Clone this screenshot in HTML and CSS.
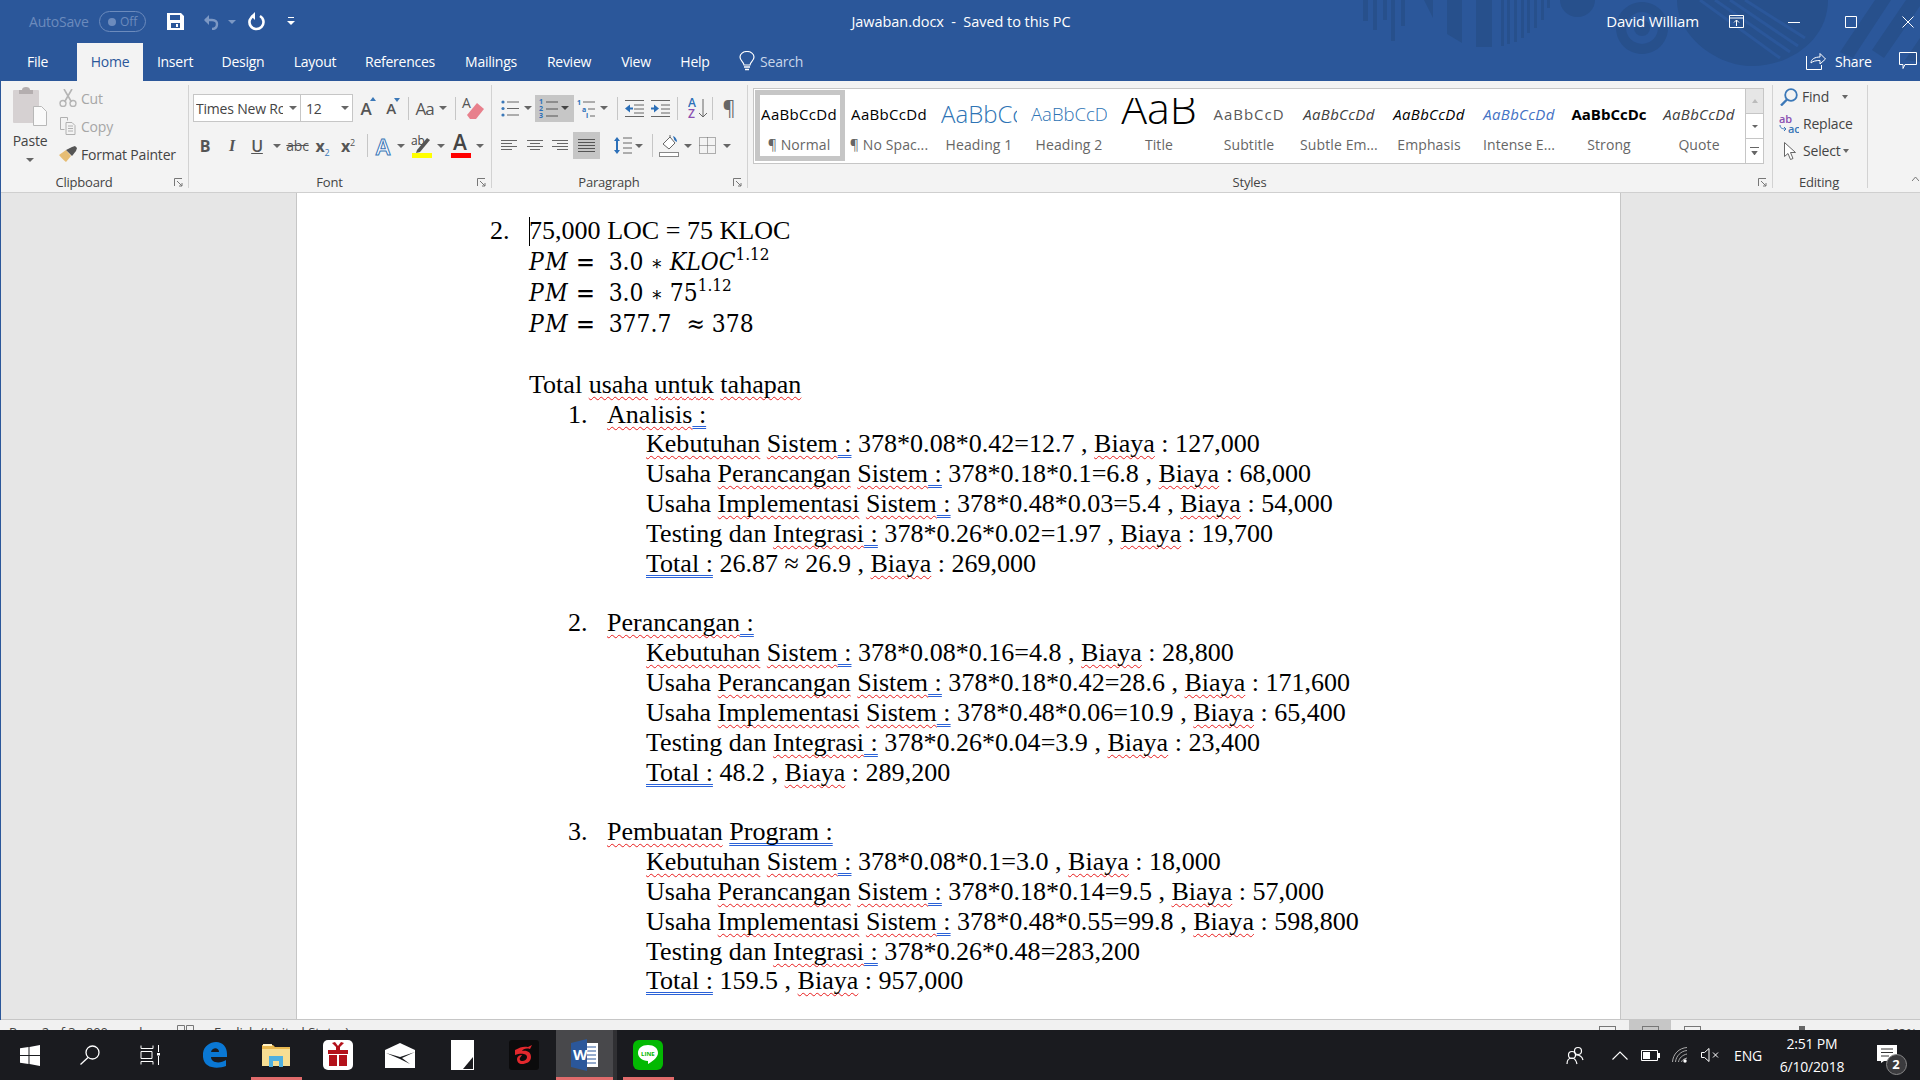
FILE: index.html
```html
<!DOCTYPE html>
<html lang="en">
<head>
<meta charset="utf-8">
<title>Jawaban.docx - Word</title>
<link rel="stylesheet" href="styles.css">
</head>
<body>
<div class="desktop">
<div class="window">
  <div class="head">
    <svg class="art" width="600" height="81" viewBox="1320 0 600 81">
      <g fill="#27508c">
        <rect x="1363" y="0" width="5" height="21"/><rect x="1373" y="0" width="4" height="30"/><rect x="1383" y="0" width="4" height="20"/><rect x="1391" y="0" width="4" height="41"/><rect x="1401" y="0" width="4" height="26"/>
        <path d="M1424 0h9v18z"/><path d="M1447 0h15v43l-15-9z"/><path d="M1476 0h16v47h-16z"/>
        <rect x="1501" y="0" width="3" height="46"/><rect x="1507" y="0" width="3" height="44"/><rect x="1514" y="0" width="3" height="42"/><rect x="1521" y="0" width="3" height="38"/><rect x="1527" y="0" width="3" height="33"/><rect x="1534" y="0" width="3" height="28"/><rect x="1541" y="0" width="3" height="20"/><rect x="1547" y="0" width="3" height="8"/>
        <path d="M1560 0h35a17.5 17 0 0 1-35 0z"/>
        <path fill-rule="evenodd" d="M1642 2a26 26 0 1 0 .01 0zM1642 12a16 16 0 1 1-.01 0z"/><circle cx="1642" cy="28" r="8"/>
        <path d="M1677 0h151c0 40-38 66-76 66c-36 0-75-30-75-66z"/>
        <path d="M1840 52l35-52h16l-38 58zM1872 50l34-50h14v6l-36 52zM1905 60l15-22v24z"/>
      </g>
      <g stroke="#2b579a" stroke-width="3" fill="none">
        <path d="M1700 0l80 58M1715 0l75 52M1730 0l68 46M1745 0l60 38"/>
      </g>
    </svg>
    <div class="titlebar">
      <div class="qat">
        <span class="autosave">AutoSave</span>
        <span class="toggle"><i class="knob"></i><span class="off">Off</span></span>
        <svg class="q-save" width="17" height="17" viewBox="0 0 17 17"><path fill="#fff" fill-rule="evenodd" d="M0 0h14l3 3v14H0zM3 2v5h10V2zM4 10v5h9v-5z"/><rect x="9" y="11" width="2" height="3" fill="#fff"/></svg>
        <svg class="q-undo" width="20" height="16" viewBox="0 0 20 16"><path d="M2 6h7c4 0 5 2 5 4s-1 5-5 5" fill="none" stroke="#7c98c4" stroke-width="2.4"/><path d="M6 1L1 6l5 5z" fill="#7c98c4"/></svg>
        <i class="car car-dim q-undocar"></i>
        <svg class="q-redo" width="17" height="19" viewBox="0 0 17 19"><path d="M6 3.5a7 7 0 1 0 6 .5" fill="none" stroke="#fff" stroke-width="2.6"/><path d="M7 0v8l-4-4z" fill="#fff"/></svg>
        <svg class="q-more" width="8" height="9" viewBox="0 0 8 9"><path d="M1 0h6v1H1z M0 4h8L4 8z" fill="#fff"/></svg>
      </div>
      <div class="doc-title">Jawaban.docx  -  Saved to this PC</div>
      <div class="winctl">
        <span class="user">David William</span>
        <svg class="w-restore" width="15" height="13" viewBox="0 0 15 13"><path d="M.5.5h14v12H.5zM.5 3h14M7.5 11V5M5 7.5l2.500-2.500 2.500 2.500" fill="none" stroke="#fff"/></svg>
        <svg class="w-min" width="12" height="12" viewBox="0 0 12 12"><path d="M0 6.500h12" stroke="#fff"/></svg>
        <svg class="w-max" width="12" height="12" viewBox="0 0 12 12"><path d="M.5.500h11v11H.5z" fill="none" stroke="#fff"/></svg>
        <svg class="w-close" width="12" height="12" viewBox="0 0 12 12"><path d="M.5.5l11 11M11.500.5l-11 11" stroke="#fff"/></svg>
      </div>
    </div>
    <nav class="tabs">
      <div class="tablist">
        <span class="tab tab-file">File</span><span class="tab active">Home</span><span class="tab">Insert</span><span class="tab">Design</span><span class="tab">Layout</span><span class="tab">References</span><span class="tab">Mailings</span><span class="tab">Review</span><span class="tab">View</span><span class="tab">Help</span>
      </div>
      <div class="search">
        <svg width="16" height="20" viewBox="0 0 16 20"><path d="M5 14c0-3-4-4-4-8a7 5.500 0 0 1 14 0c0 4-4 5-4 8z" fill="none" stroke="#fff" stroke-width="1.200"/><path d="M5 16h6M6 18.500h4" stroke="#fff" stroke-width="1.500"/></svg>
        <span>Search</span>
      </div>
      <div class="share">
        <svg width="20" height="18" viewBox="0 0 20 18"><path d="M.5 4v13.500h15V13" fill="none" stroke="#fff"/><path d="M5 11c0-4 4-6 9-6V1.500L19.500 7 14 12V8.500c-4 0-7 .5-9 2.500z" fill="none" stroke="#fff"/></svg>
        <span>Share</span>
        <svg class="comment" width="18" height="18" viewBox="0 0 18 18"><path d="M.5.500h17v12H6l-2 4v-4H.5z" fill="none" stroke="#fff"/></svg>
      </div>
    </nav>
  </div>

  <section class="ribbon">
    <div class="group g-clip">
      <div class="g-body clip">
        <div class="paste">
          <svg width="37" height="40" viewBox="0 0 37 40"><rect x="1" y="4" width="26" height="33" rx="1" fill="#d6d1d2"/><path d="M7 4h3a4 3 0 0 1 8 0h3v4H7z" fill="#b4aeaf"/><path d="M21.500 20.500h8l5 5v14h-13z" fill="#fafafa" stroke="#b8b8b8"/></svg>
          <span class="paste-lbl">Paste</span>
          <i class="car"></i>
        </div>
        <div class="clip-list">
          <div class="clip-row dim">
            <svg width="18" height="18" viewBox="0 0 18 18"><path d="M5 0l7.500 13M13 0L5.500 13" stroke="#b5b5b5" stroke-width="1.600" fill="none"/><circle cx="4" cy="14.500" r="3" fill="none" stroke="#b5b5b5" stroke-width="1.400"/><circle cx="14" cy="14.500" r="3" fill="none" stroke="#b5b5b5" stroke-width="1.400"/></svg>
            <span>Cut</span>
          </div>
          <div class="clip-row dim">
            <svg width="18" height="18" viewBox="0 0 18 18"><path d="M1.500.500h7v3M1.500.500v12h4M7 5.500h6l3 3v9H7zM9 9h5M9 11.500h5M9 14h5" fill="none" stroke="#b0b0b0"/></svg>
            <span>Copy</span>
          </div>
          <div class="clip-row">
            <svg width="18" height="16" viewBox="0 0 18 16"><path d="M0 9l7-5 5 6-5 6C4 14 2 11 0 9z" fill="#e6bd74"/><path d="M7 4l6-3 3-1 2 2-1 3-4 5z" fill="#555"/></svg>
            <span>Format Painter</span>
          </div>
        </div>
      </div>
      <div class="g-label">Clipboard</div>
      <svg class="launch" width="9" height="9" viewBox="0 0 9 9"><path d="M.5 8V.5H8M3 3l5 5M8 5v3H5" fill="none" stroke="#777"/></svg>
    </div>

    <div class="group g-font">
      <div class="g-body rows">
        <div class="grid font-r1">
          <div class="fontbox"><span class="fname">Times New Ro</span><i class="car"></i></div>
          <div class="fontbox sizebox"><span class="fname">12</span><i class="car"></i></div>
          <span class="ic ic-grow"><span class="bigA">A</span><i class="up"></i></span>
          <span class="ic ic-grow"><span class="smallA">A</span><i class="up down"></i></span>
          <i class="vsep"></i>
          <span class="ic aa">Aa</span><i class="car"></i>
          <i class="vsep"></i>
          <svg width="26" height="26" viewBox="0 0 26 26"><text x="1" y="13" class="svgA">A</text><path d="M6 20l10-12 7 6-8 10H9z" fill="#e8808c"/></svg>
        </div>
        <div class="grid font-r2">
          <span class="ic b">B</span><span class="ic i">I</span><span class="ic u">U</span><i class="car"></i>
          <span class="ic abc">abc</span>
          <span class="ic xs">x<sub>2</sub></span><span class="ic xs">x<sup>2</sup></span>
          <i class="vsep"></i>
          <span class="ic fx">A</span><i class="car"></i>
          <svg width="22" height="24" viewBox="0 0 22 24"><text x="0" y="11" class="svgab">ab</text><path d="M6 16l10-12 3 2-10 12-4 1z" fill="#555"/><rect x="1" y="19" width="20" height="5" fill="#ffff00"/></svg><i class="car"></i>
          <svg width="20" height="24" viewBox="0 0 20 24"><text x="2" y="16" class="svgAb">A</text><rect y="19" width="20" height="5" fill="#ff0000"/></svg><i class="car"></i>
        </div>
      </div>
      <div class="g-label">Font</div>
      <svg class="launch" width="9" height="9" viewBox="0 0 9 9"><path d="M.5 8V.5H8M3 3l5 5M8 5v3H5" fill="none" stroke="#777"/></svg>
    </div>

    <div class="group g-para">
      <div class="g-body rows">
        <div class="grid para-r1">
          <svg width="19" height="17" viewBox="0 0 19 17"><g fill="#3b78b8"><circle cx="2" cy="2" r="1.600"/><circle cx="2" cy="8.500" r="1.600"/><circle cx="2" cy="15" r="1.600"/></g><path d="M6 2h12M6 8.500h12M6 15h12" stroke="#666"/></svg>
          <i class="car"></i>
          <div class="on numbering">
            <svg width="19" height="19" viewBox="0 0 19 19"><g class="numdig"><text x="0" y="5">1</text><text x="0" y="12">2</text><text x="0" y="19">3</text></g><path d="M7 3h12M7 10h12M7 17h12" stroke="#555"/></svg>
            <i class="car car-dark"></i>
          </div>
          <svg class="to-end" width="19" height="19" viewBox="0 0 19 19"><g class="numdig"><text x="0" y="6">1</text><text x="5" y="13">a</text><text x="9" y="19">i</text></g><path d="M6 3h12M11 10h7M13 17h5" stroke="#666"/></svg>
          <i class="car"></i>
          <i class="vsep"></i>
          <svg width="19" height="17" viewBox="0 0 19 17"><path d="M0 .5h19M9 5h10M9 9h10M9 13h10M0 16.500h19" stroke="#666"/><path d="M0 8.500l5-4v3h3v2H5v3z" fill="#2b6fb8"/></svg>
          <svg width="19" height="17" viewBox="0 0 19 17"><path d="M0 .5h19M10 5h9M10 9h9M10 13h9M0 16.500h19" stroke="#666"/><path d="M8 8.500l-5-4v3H0v2h3v3z" fill="#2b6fb8"/></svg>
          <i class="vsep"></i>
          <svg class="to-end" width="20" height="21" viewBox="0 0 20 21"><text x="0" y="9" class="az1">A</text><text x="0" y="20" class="az2">Z</text><path d="M15 1v18M11 15l4 4 4-4" fill="none" stroke="#666"/></svg>
          <i class="vsep"></i>
          <span class="ic pil">¶</span>
        </div>
        <div class="grid para-r2">
          <svg width="17" height="11" viewBox="0 0 17 11"><path d="M0 .5h16M0 3.500h11M0 6.500h16M0 9.500h11" stroke="#666"/></svg>
          <svg width="17" height="11" viewBox="0 0 17 11"><path d="M0 .5h16M3 3.500h10M0 6.500h16M3 9.500h10" stroke="#666"/></svg>
          <svg width="17" height="11" viewBox="0 0 17 11"><path d="M0 .5h16M5 3.500h11M0 6.500h16M5 9.500h11" stroke="#666"/></svg>
          <div class="on just"><svg width="17" height="13" viewBox="0 0 17 13"><path d="M0 .5h17M0 3.500h17M0 6.500h17M0 9.500h17M0 12.500h17" stroke="#555"/></svg></div>
          <svg class="to-end" width="18" height="19" viewBox="0 0 18 19"><path d="M3 3v13" stroke="#2b6fb8" stroke-width="2"/><path d="M0 5l3-4 3 4zM0 14l3 4 3-4z" fill="#2b6fb8"/><path d="M9 2h9M9 7h9M9 12h9M9 17h9" stroke="#666"/></svg>
          <i class="car"></i>
          <i class="vsep"></i>
          <svg width="20" height="23" viewBox="0 0 20 23"><rect x=".5" y="18.500" width="19" height="4" fill="#fff" stroke="#888"/><path d="M4 10l7-7 5 6-6 6z" fill="#fff" stroke="#666"/><path d="M11 1v3" stroke="#666"/><path d="M14 2c3 1 4 4 4 6-2-1-3-2-3-3z" fill="#2b6fb8"/></svg>
          <i class="car"></i>
          <svg width="17" height="17" viewBox="0 0 17 17"><path d="M.5.500h16v16H.5zM.5 8.500h16M8.500.500v16" fill="none" stroke="#666" stroke-dasharray="1 1"/></svg>
          <i class="car"></i>
        </div>
      </div>
      <div class="g-label">Paragraph</div>
      <svg class="launch" width="9" height="9" viewBox="0 0 9 9"><path d="M.5 8V.5H8M3 3l5 5M8 5v3H5" fill="none" stroke="#777"/></svg>
    </div>

    <div class="group g-styles">
      <div class="gallery">
        <div class="style selected"><div class="sample">AaBbCcDd</div><div class="slabel">¶ Normal</div></div>
        <div class="style"><div class="sample">AaBbCcDd</div><div class="slabel">¶ No Spac...</div></div>
        <div class="style"><div class="sample s-h1">AaBbCc</div><div class="slabel">Heading 1</div></div>
        <div class="style"><div class="sample s-h2">AaBbCcD</div><div class="slabel">Heading 2</div></div>
        <div class="style"><div class="sample s-title">AaB</div><div class="slabel">Title</div></div>
        <div class="style"><div class="sample s-sub">AaBbCcD</div><div class="slabel">Subtitle</div></div>
        <div class="style"><div class="sample s-se">AaBbCcDd</div><div class="slabel">Subtle Em...</div></div>
        <div class="style"><div class="sample s-em">AaBbCcDd</div><div class="slabel">Emphasis</div></div>
        <div class="style"><div class="sample s-ie">AaBbCcDd</div><div class="slabel">Intense E...</div></div>
        <div class="style"><div class="sample s-st">AaBbCcDc</div><div class="slabel">Strong</div></div>
        <div class="style"><div class="sample s-se">AaBbCcDd</div><div class="slabel">Quote</div></div>
        <div class="scroller">
          <span class="sbtn disabled"><i class="up-car"></i></span>
          <span class="sbtn"><i class="car"></i></span>
          <span class="sbtn last"><i class="more-car"></i></span>
        </div>
      </div>
      <div class="g-label l-styles">Styles</div>
      <svg class="launch" width="9" height="9" viewBox="0 0 9 9"><path d="M.5 8V.5H8M3 3l5 5M8 5v3H5" fill="none" stroke="#777"/></svg>
    </div>

    <div class="group g-edit">
      <div class="g-body edit">
        <div class="edit-row e-find">
          <svg width="18" height="18" viewBox="0 0 18 18"><circle cx="11" cy="7" r="5.800" fill="none" stroke="#3b78b8" stroke-width="1.800"/><path d="M7 11.500L1 17.500" stroke="#3b78b8" stroke-width="2.400"/></svg>
          <span>Find</span><i class="car car-find"></i>
        </div>
        <div class="edit-row e-rep">
          <svg width="20" height="20" viewBox="0 0 20 20"><text x="0" y="9" class="abtop">ab</text><text x="9" y="19" class="acbot">ac</text><path d="M1 11c0 3 2 4 6 4M5 13l2 2-2 2" fill="none" stroke="#3b78b8"/></svg>
          <span>Replace</span>
        </div>
        <div class="edit-row e-sel">
          <svg width="12" height="18" viewBox="0 0 12 18"><path d="M.5.500v14l3.500-3 2.500 6 2.500-1-2.500-6h5z" fill="#fff" stroke="#666"/></svg>
          <span>Select</span><i class="car car-sel"></i>
        </div>
      </div>
      <div class="g-label g-label-plain">Editing</div>
    </div>
    <svg class="collapse" width="7" height="5" viewBox="0 0 7 5"><path d="M0 5l3.500-4L7 5" fill="none" stroke="#777"/></svg>
  </section>

  <main class="docarea">
    <article class="page">
      <div class="ln tall n0"><span class="num">2.</span><i class="cursor"></i>75,000 LOC = 75 KLOC</div>
      <div class="ln tall l0 math"><em class="pm">PM</em><span class="eq">=</span><span>3.0</span><span class="ast">∗</span><em>KLOC</em><sup>1.12</sup></div>
      <div class="ln tall l0 math"><em class="pm">PM</em><span class="eq">=</span><span>3.0</span><span class="ast">∗</span><span>75</span><sup>1.12</sup></div>
      <div class="ln tall l0 math"><em class="pm">PM</em><span class="eq">=</span><span>377.7</span><span class="apx">≈</span><span>378</span></div>
      <div class="ln"></div>
      <div class="ln l0">Total <u class="r">usaha</u> <u class="r">untuk</u> <u class="r">tahapan</u></div>
      <div class="ln n1"><span class="num">1.</span><u class="r">Analisis</u><u class="g"> :</u></div>
      <div class="ln l2"><u class="r">Kebutuhan</u> <u class="r">Sistem</u><u class="g"> :</u> 378*0.08*0.42=12.7 , <u class="r">Biaya</u> : 127,000</div>
      <div class="ln l2">Usaha <u class="r">Perancangan</u> <u class="r">Sistem</u><u class="g"> :</u> 378*0.18*0.1=6.8 , <u class="r">Biaya</u> : 68,000</div>
      <div class="ln l2">Usaha <u class="r">Implementasi</u> <u class="r">Sistem</u><u class="g"> :</u> 378*0.48*0.03=5.4 , <u class="r">Biaya</u> : 54,000</div>
      <div class="ln l2">Testing dan <u class="r">Integrasi</u><u class="g"> :</u> 378*0.26*0.02=1.97 , <u class="r">Biaya</u> : 19,700</div>
      <div class="ln l2"><u class="g">Total :</u> 26.87 ≈ 26.9 , <u class="r">Biaya</u> : 269,000</div>
      <div class="ln"></div>
      <div class="ln n1"><span class="num">2.</span><u class="r">Perancangan</u><u class="g"> :</u></div>
      <div class="ln l2"><u class="r">Kebutuhan</u> <u class="r">Sistem</u><u class="g"> :</u> 378*0.08*0.16=4.8 , <u class="r">Biaya</u> : 28,800</div>
      <div class="ln l2">Usaha <u class="r">Perancangan</u> <u class="r">Sistem</u><u class="g"> :</u> 378*0.18*0.42=28.6 , <u class="r">Biaya</u> : 171,600</div>
      <div class="ln l2">Usaha <u class="r">Implementasi</u> <u class="r">Sistem</u><u class="g"> :</u> 378*0.48*0.06=10.9 , <u class="r">Biaya</u> : 65,400</div>
      <div class="ln l2">Testing dan <u class="r">Integrasi</u><u class="g"> :</u> 378*0.26*0.04=3.9 , <u class="r">Biaya</u> : 23,400</div>
      <div class="ln l2"><u class="g">Total :</u> 48.2 , <u class="r">Biaya</u> : 289,200</div>
      <div class="ln"></div>
      <div class="ln n1"><span class="num">3.</span><u class="r">Pembuatan</u> <u class="g">Program :</u></div>
      <div class="ln l2"><u class="r">Kebutuhan</u> <u class="r">Sistem</u><u class="g"> :</u> 378*0.08*0.1=3.0 , <u class="r">Biaya</u> : 18,000</div>
      <div class="ln l2">Usaha <u class="r">Perancangan</u> <u class="r">Sistem</u><u class="g"> :</u> 378*0.18*0.14=9.5 , <u class="r">Biaya</u> : 57,000</div>
      <div class="ln l2">Usaha <u class="r">Implementasi</u> <u class="r">Sistem</u><u class="g"> :</u> 378*0.48*0.55=99.8 , <u class="r">Biaya</u> : 598,800</div>
      <div class="ln l2">Testing dan <u class="r">Integrasi</u><u class="g"> :</u> 378*0.26*0.48=283,200</div>
      <div class="ln l2"><u class="g">Total :</u> 159.5 , <u class="r">Biaya</u> : 957,000</div>
    </article>
  </main>

  <footer class="status">
    <span class="st-page">Page 2 of 3   800 words</span>
    <svg class="st-book" width="17" height="10" viewBox="0 0 17 10"><path d="M.5 10V.5h7V10M9.500 10V.5h7V10" fill="none" stroke="#777"/></svg>
    <span class="st-lang">English (United States)</span>
    <span class="st-view st-v1"></span>
    <span class="st-active"><i class="st-view"></i></span>
    <span class="st-view st-v3"></span>
    <i class="st-thumb"></i>
    <span class="st-zoom">163%</span>
  </footer>
</div>

<div class="taskbar">
  <div class="tb-left">
    <span class="tb-sys">
      <svg width="20" height="21" viewBox="0 0 20 21"><path fill="#fff" d="M0 3.200L8.500 2v8H0zM9.500 1.900L20 0v10H9.500zM0 11h8.500v8L0 17.800zM9.500 11H20v10L9.500 19.100z"/></svg>
    </span>
    <span class="tb-sys">
      <svg width="20" height="20" viewBox="0 0 20 20"><circle cx="12.500" cy="7.500" r="6.500" fill="none" stroke="#fff" stroke-width="1.300"/><path d="M8 12.500L.5 19.500" stroke="#fff" stroke-width="1.300"/></svg>
    </span>
    <span class="tb-sys">
      <svg width="20" height="20" viewBox="0 0 20 20"><path d="M1 3.500h12v-3M1 .5v3M1 6.500h11v7H1zM1 19.500v-3h12v3M18.500 0v7M18.500 11v9" fill="none" stroke="#fff"/><rect x="17" y="8" width="3" height="2.500" fill="#fff"/></svg>
    </span>
    <span class="tb-btn tb-first">
      <svg width="25" height="26" viewBox="0 0 25 26"><path fill="#0a78d4" fill-rule="evenodd" d="M1 11C2 4 8 0 14 0c7 0 11 5 11 12v3H9c0 6 9 7 15 3v6c-8 3-22 3-23-9zM9 10h8c0-5-7-5-8 0z"/></svg>
    </span>
    <span class="tb-btn run">
      <svg width="28" height="23" viewBox="0 0 28 23"><path fill="#e9b84f" d="M0 1h11l2 2h15v18H0z"/><path fill="#f7de93" d="M0 5h28v17H0z"/><path fill="#fff3c7" d="M1 0h9v2H1z"/><path fill="#4fb0e0" d="M7 23V12h14v11h-4v-6h-6v6z"/></svg>
    </span>
    <span class="tb-btn">
      <svg width="30" height="30" viewBox="0 0 30 30"><rect width="30" height="30" rx="5" fill="#fff"/><path fill="#b3111a" d="M5 10h20v4H5zM6 15h8v11H6zM16 15h8v11h-8zM13 10V7L9 3l3-1 3 4 3-4 3 1-4 4v3z"/></svg>
    </span>
    <span class="tb-btn">
      <svg width="30" height="25" viewBox="0 0 30 25"><path fill="#fff" d="M0 7L15 0l15 7v18H0z"/><path fill="#191a1e" d="M1 10l14 4 15-5-13 6 8 6-10-5z"/></svg>
    </span>
    <span class="tb-btn">
      <svg width="23" height="30" viewBox="0 0 23 30"><path fill="#fff" d="M0 0h23v30H0z"/><path fill="#1a1a1e" d="M12 29l10-12v12z"/></svg>
    </span>
    <span class="tb-btn">
      <svg width="30" height="30" viewBox="0 0 30 30"><rect width="30" height="30" rx="3" fill="#0b0b0c"/><path d="M6 10c5-3 9-4 13-3l4-2-2 4c-4-1-7 0-8 2 5-1 9 1 9 6 0 5-5 7-9 7-3 0-5-2-5-5 0-2 2-4 5-4-1 2-3 3-2 5 1 2 7 1 7-3s-7-4-12-2z" fill="#e2282d"/></svg>
    </span>
    <span class="tb-btn tb-word run">
      <svg width="27" height="32" viewBox="0 0 27 32"><path fill="#fff" d="M13 4h14v24H13z"/><path d="M16 8h9M16 12h9M16 16h9M16 20h9M16 24h9" stroke="#2b579a"/><path fill="#2b579a" d="M0 4l16-4v32L0 28z"/><text x="2" y="21" class="wlogo">W</text></svg>
    </span>
    <span class="tb-btn run">
      <svg width="30" height="30" viewBox="0 0 30 30"><rect width="30" height="30" rx="6" fill="#03b902"/><path fill="#fff" d="M15 5c6 0 10 3 10 8 0 5-7 9-10 11v-3C9 21 5 17 5 13c0-5 4-8 10-8z"/><text x="8" y="16" class="linetxt">LINE</text></svg>
    </span>
  </div>
  <div class="tray">
    <svg width="18" height="19" viewBox="0 0 18 19"><circle cx="12" cy="5" r="3.500" fill="none" stroke="#fff" stroke-width="1.200"/><circle cx="6" cy="9" r="3.500" fill="none" stroke="#fff" stroke-width="1.200"/><path d="M1 18c0-4 2-6 5-6s4 2 5 6M10 9c3 0 6 1 7 5" fill="none" stroke="#fff" stroke-width="1.200"/></svg>
    <span></span>
    <svg width="16" height="9" viewBox="0 0 16 9"><path d="M.5 8.500L8 1l7.500 7.500" fill="none" stroke="#fff" stroke-width="1.100"/></svg>
    <svg width="19" height="11" viewBox="0 0 19 11"><path d="M.5.500h16v10H.5z" fill="none" stroke="#fff"/><rect x="2" y="2" width="7" height="7" fill="#fff"/><rect x="17" y="3" width="2" height="5" fill="#fff"/></svg>
    <svg width="16" height="16" viewBox="0 0 16 16"><path d="M.5 15C1 7 7 1 15 .5M3.500 15C4 9 9 4 15 3.500M6.500 15c.5-4 4-7 8.500-8" fill="none" stroke="#aaa"/><path d="M9.500 15c.5-2 2-3 5.500-4" fill="none" stroke="#aaa"/><circle cx="13" cy="14" r="1.700" fill="#fff"/></svg>
    <svg width="19" height="14" viewBox="0 0 19 14"><path d="M.5 4.500h3L8 .5v13L3.500 9.500h-3zM12 4.500l5 5M17 4.500l-5 5" fill="none" stroke="#fff"/></svg>
    <span class="eng">ENG</span>
    <div class="clock"><span>2:51 PM</span><span>6/10/2018</span></div>
    <span class="notif">
      <svg width="20" height="18" viewBox="0 0 20 18"><path fill="#fff" d="M0 0h20v16H7l-3 2v-2H0z"/><path d="M4 4h12M4 7.500h12M4 11h8" stroke="#333"/></svg>
      <span class="badge">2</span>
    </span>
  </div>
</div>
</div>
</body>
</html>
```

FILE: styles.css
```css
* { box-sizing: border-box; }
html, body { margin: 0; padding: 0; }
body { font-family: "Open Sans", "Noto Sans", sans-serif; background: #1a1b1f; }
svg { display: block; flex: none; }
i { display: block; }
.desktop { width: 1920px; height: 1080px; display: flex; flex-direction: column; overflow: hidden; }
.window { height: 1030px; display: flex; flex-direction: column; border-left: 1px solid #2b579a; background: #f3f3f3; }

/* header */
.head { position: relative; background: #2b579a; color: #fff; height: 81px; flex: none; margin-left: -1px; }
.art { position: absolute; right: 0; top: 0; }
.titlebar { position: relative; height: 43px; display: grid; grid-template-columns: 1fr auto 1fr; align-items: center; }
.qat { display: flex; align-items: center; padding-left: 29px; }
.autosave { font-size: 14px; color: #6c8bbd; width: 63px; white-space: nowrap; letter-spacing: -.2px; }
.toggle { width: 47px; height: 21px; margin-left: 7px; border: 1px solid #6c8bbd; border-radius: 11px; display: flex; align-items: center; padding-left: 8px; gap: 4px; }
.knob { width: 8px; height: 8px; border-radius: 50%; background: #6c8bbd; }
.off { font-size: 12px; color: #6c8bbd; }
.q-save { margin-left: 21px; }
.q-undo { margin-left: 19px; }
.q-undocar { margin-left: 5px; }
.q-redo { margin-left: 12px; }
.q-more { margin-left: 22px; }
.doc-title { font-size: 14.5px; white-space: pre; letter-spacing: -.05px; margin-left: 2px; }
.winctl { display: flex; align-items: center; justify-content: flex-end; padding-right: 6px; }
.user { font-size: 15px; white-space: nowrap; letter-spacing: -.15px; padding-bottom: 2px; }
.w-restore { margin-left: 30px; }
.w-min { margin-left: 44px; }
.w-max { margin-left: 45px; }
.w-close { margin-left: 45px; }

.tabs { position: relative; height: 38px; display: flex; align-items: stretch; }
.tablist { display: grid; grid-template-columns: 77px 66px 64px 72px 72px 98px 84px 72px 62px 56px; }
.tab { font-size: 14px; letter-spacing: -.25px; display: flex; align-items: center; justify-content: center; padding-bottom: 1px; }
.tab-file { padding-right: 2px; }
.tab.active { background: #f3f3f3; color: #2b579a; }
.search { display: flex; align-items: center; padding: 0 0 2px 16px; gap: 5px; font-size: 14px; color: #c9d6ea; letter-spacing: -.2px; }
.share { margin-left: auto; display: flex; align-items: center; font-size: 14px; padding: 0 3px 2px 0; letter-spacing: -.2px; }
.share span { margin-left: 9px; width: 37px; }
.comment { margin-left: 27px; }

/* ribbon */
.ribbon { position: relative; display: flex; height: 112px; flex: none; padding-top: 4px; border-bottom: 1px solid #cfcfcf; background: #f3f3f3; color: #444; font-size: 14px; letter-spacing: -.2px; }
.group { position: relative; height: 103px; display: flex; flex-direction: column; border-right: 1px solid #d2d2d2; flex: none; }
.g-clip { width: 188px; }
.g-font { width: 303px; }
.g-para { width: 256px; }
.g-styles { width: 1025px; }
.g-edit { width: 95px; }
.g-body { height: 89px; flex: none; }
.g-label { height: 14px; line-height: 16px; font-size: 13px; text-align: center; color: #444; padding-right: 21px; }
.g-label-plain { padding-right: 2px; }
.launch { position: absolute; right: 5px; bottom: 1px; }
.collapse { position: absolute; right: 1px; top: 95px; }

.car { width: 0; height: 0; border-left: 4px solid transparent; border-right: 4px solid transparent; border-top: 4px solid #666; }
.car-dim { border-top-color: #7c98c4; }
.car-dark { border-top-color: #444; }

.clip { display: flex; }
.paste { width: 58px; display: flex; flex-direction: column; align-items: center; padding-top: 1px; }
.paste-lbl { margin-top: 5px; line-height: 20px; }
.paste .car { margin-top: 7px; }
.clip-list { display: flex; flex-direction: column; margin-top: -1px; }
.clip-row { height: 28px; display: flex; align-items: center; gap: 4px; white-space: nowrap; }
.clip-row.dim { color: #a6a6a6; }

.rows { display: flex; flex-direction: column; padding-top: 9px; gap: 10px; }
.grid { display: grid; justify-items: center; align-items: center; justify-content: start; }
.font-r1 { height: 28px; grid-template-columns: 108px 52px 26px 24px 10px 23px 14px 10px 28px; margin-left: 4px; }
.font-r2 { height: 27px; grid-template-columns: 28px 26px 24px 16px 25px 25px 26px 12px 20px 16px 25px 14px 25px 14px; margin-left: 2px; }
.fontbox { width: 100%; height: 28px; background: #fff; border: 1px solid #c6c6c6; display: flex; align-items: center; padding: 0 3px 0 2px; overflow: hidden; }
.sizebox { border-left: 0; }
.fname { flex: 1; overflow: hidden; white-space: nowrap; font-size: 14px; margin-right: 6px; }
.sizebox .fname { padding-left: 3px; }
.vsep { width: 1px; height: 23px; background: #c6c6c6; }
.ic { color: #555; line-height: 1; }
.ic-grow { position: relative; display: block; }
.bigA { font-size: 17px; font-weight: 600; }
.smallA { font-size: 15px; font-weight: 600; }
.up { position: absolute; right: -4px; top: -3px; border-left: 3px solid transparent; border-right: 3px solid transparent; border-bottom: 4px solid #3b78b8; }
.down { border-bottom: 0; border-top: 4px solid #3b78b8; }
.aa { font-size: 17px; letter-spacing: -1px; }
.svgA { font-size: 14px; fill: #555; }
.svgab { font-size: 12px; fill: #444; }
.svgAb { font-size: 21px; fill: #444; font-weight: 600; }
.b { font-weight: 700; font-size: 16px; }
.i { font-style: italic; font-weight: 600; font-size: 16px; font-family: "Liberation Serif", serif; }
.u { text-decoration: underline; font-weight: 600; font-size: 16px; }
.abc { text-decoration: line-through; font-size: 14px; }
.xs { font-weight: 700; font-size: 16px; }
.xs sub, .xs sup { font-size: 9px; font-weight: 400; color: #3b78b8; line-height: 0; }
.xs sup { color: #555; }
.fx { font-size: 22px; font-weight: 600; color: #fff; -webkit-text-stroke: 1px #3b78b8; }

.para-r1 { height: 28px; grid-template-columns: 20px 15px 39px 22px 16px 10px 24px 28px 6px 28px 8px 26px; margin-left: 8px; }
.para-r2 { height: 27px; grid-template-columns: 26px 26px 25px 27px 32px 14px 12px 22px 16px 22px 18px; margin-left: 4px; }
.to-end { justify-self: end; }
.on { background: #c6c6c6; height: 27px; display: flex; align-items: center; }
.numbering { width: 39px; padding-left: 4px; gap: 3px; }
.just { width: 27px; justify-content: center; }
.numdig text { font-size: 7px; fill: #2b6fb8; font-weight: 700; letter-spacing: 0; }
.az1 { font-size: 12px; fill: #2b6fb8; font-weight: 600; }
.az2 { font-size: 12px; fill: #8a4fb0; font-weight: 600; }
.pil { font-size: 20px; color: #666; }

.gallery { width: 1011px; height: 76px; margin: 3px 0 0 5px; flex: none; display: flex; background: #fff; border: 1px solid #c6c6c6; padding: 1px; }
.style { width: 90px; height: 71px; flex: none; display: flex; flex-direction: column; align-items: center; padding-right: 2px; }
.style.selected { outline: 5px solid #c6c6c6; outline-offset: -5px; }
.sample { width: 76px; height: 30px; margin-top: 8px; overflow: hidden; white-space: nowrap; text-align: center; font-size: 15px; line-height: 32px; color: #000; letter-spacing: .3px; }
.slabel { margin-top: 7px; line-height: 20px; color: #666; font-size: 14px; white-space: nowrap; letter-spacing: .1px; }
.s-h1 { font-size: 24px; font-weight: 300; color: #2e74b5; text-align: left; line-height: 32px; letter-spacing: 0; }
.s-h2 { font-size: 18.500px; font-weight: 300; color: #2e74b5; text-align: left; letter-spacing: 0; }
.s-title { font-size: 43px; font-weight: 300; line-height: 20px; overflow: hidden; letter-spacing: 0; }
.s-sub { color: #595959; letter-spacing: 1px; }
.s-se { font-style: italic; color: #404040; }
.s-em { font-style: italic; }
.s-ie { font-style: italic; color: #4472c4; }
.s-st { font-weight: 700; letter-spacing: 0; }
.scroller { width: 18px; display: flex; flex-direction: column; margin: -1px -1px -1px 0; border-left: 1px solid #c6c6c6; flex: none; }
.sbtn { flex: 1; display: flex; align-items: center; justify-content: center; border-bottom: 1px solid #c6c6c6; }
.sbtn.disabled { background: #e6e6e6; }
.sbtn.last { border-bottom: 0; }
.sbtn .car { border-left-width: 3px; border-right-width: 3px; border-top-width: 3px; }
.up-car { border-left: 3px solid transparent; border-right: 3px solid transparent; border-bottom: 4px solid #bbb; }
.more-car { width: 9px; height: 9px; border-top: 1px solid #666; background: linear-gradient(#666,#666) top 3px center / 9px 4px no-repeat; clip-path: polygon(0 0,100% 0,100% 30%,50% 100%,0 30%); }
.l-styles { margin-top: 10px; flex: none; }

.edit { display: flex; flex-direction: column; margin: -2px 0 2px; }
.edit-row { height: 27px; flex: none; display: flex; align-items: center; white-space: nowrap; }
.edit-row span { margin-left: 4px; }
.e-find { padding-left: 7px; }
.e-rep { padding-left: 6px; }
.e-sel { padding-left: 11px; }
.e-sel span { margin-left: 7px; }
.car-find { margin-left: 13px; border-left-width: 3px; border-right-width: 3px; }
.car-sel { margin-left: 3px; border-left-width: 3px; border-right-width: 3px; }
.abtop { font-size: 11px; fill: #8a4fb0; font-weight: 600; }
.acbot { font-size: 11px; fill: #3b78b8; font-weight: 600; }

/* document */
.docarea { flex: 1; min-height: 0; background: #e6e6e6; display: flex; justify-content: center; overflow: hidden; border-bottom: 1px solid #c6c6c6; padding-right: 4px; }
.page { width: 1325px; background: #fff; border-left: 1px solid #c6c6c6; border-right: 1px solid #c6c6c6; padding: 23px 0 0 193px; font-family: "Liberation Serif", "Times New Roman", serif; font-size: 26.060px; color: #000; overflow: hidden; }
.ln { height: 29.840px; line-height: 30px; white-space: pre; }
.tall { height: 31px; }
.num { display: inline-block; width: 39px; }
.l0 { padding-left: 39px; }
.n1 { padding-left: 78px; }
.l2 { padding-left: 156px; }
.cursor { display: inline-block; width: 1px; height: 29px; background: #000; margin-right: -1px; vertical-align: -7px; }
u.r { text-decoration: underline wavy #e81c1c 1.200px; text-underline-offset: 2.500px; text-decoration-skip-ink: none; }
u.g { text-decoration: underline double #2a62d8 1px; text-underline-offset: 3px; text-decoration-skip-ink: none; }
.math { font-family: "DejaVu Serif", serif; font-stretch: condensed; font-size: 24.400px; }
.math em { font-style: italic; }
.math .pm { letter-spacing: 1.500px; }
.math sup { font-size: 17px; line-height: 0; vertical-align: 10px; }
.eq { margin: 0 14px 0 7px; -webkit-text-stroke: .4px #000; }
.ast { margin: 0 7px; font-size: 20px; }
.apx { margin: 0 7px 0 15px; }

.status { height: 10px; flex: none; display: flex; overflow: hidden; background: #f1f1f1; margin-left: -1px; color: #444; font-size: 13px; line-height: 18px; white-space: pre; }
.status > span { padding-top: 3px; }
.st-page { margin-left: 9px; width: 168px; }
.st-book { margin-top: 5px; }
.st-lang { margin-left: 20px; }
.st-view { width: 17px; height: 8px; border: 1px solid #777; border-bottom: 0; }
.status .st-v1 { margin-left: auto; margin-top: 6px; padding: 0; }
.status .st-active { width: 42px; margin-left: 13px; background: #c6c6c6; display: flex; justify-content: center; padding-top: 6px; }
.status .st-v3 { margin-left: 13px; margin-top: 6px; padding: 0; }
.st-thumb { width: 6px; height: 4px; margin: 6px 0 0 98px; background: #666; }
.status .st-zoom { margin-left: 79px; width: 36px; padding-top: 4px; }

/* taskbar */
.taskbar { height: 50px; flex: none; background: #1a1b1f; color: #fff; display: flex; justify-content: space-between; }
.tb-left { display: flex; }
.tb-sys { width: 60px; display: flex; align-items: center; justify-content: center; }
.tb-btn { position: relative; width: 62px; display: flex; align-items: center; justify-content: center; }
.tb-first { margin-left: 3px; }
.tb-word { width: 57px; margin: 0 4px 0 1px; background: #48484b; box-shadow: 4px 0 0 #303033; }
.run::after { content: ""; position: absolute; left: 5.500px; right: 5.500px; bottom: 0; height: 3px; background: #e06b6b; }
.tb-word.run::after { left: 0; right: 0; }
.wlogo { font-size: 15px; font-weight: 700; fill: #fff; }
.linetxt { font-size: 6px; font-weight: 700; fill: #03b902; letter-spacing: 0; }
.tray { width: 360px; display: grid; grid-template-columns: 30px 15px 30px 30px 30px 30px 46px 82px 67px; justify-items: center; align-items: center; }
.eng { font-size: 14px; letter-spacing: -.2px; }
.clock { display: flex; flex-direction: column; align-items: center; font-size: 14px; line-height: 23px; letter-spacing: -.2px; white-space: nowrap; }
.notif { position: relative; display: block; padding-bottom: 3px; }
.badge { position: absolute; left: 9px; top: 9px; width: 21px; height: 21px; border-radius: 50%; background: #3b3b3e; border: 1px solid #888; font-size: 13px; font-weight: 700; color: #fff; display: flex; align-items: center; justify-content: center; }
```
